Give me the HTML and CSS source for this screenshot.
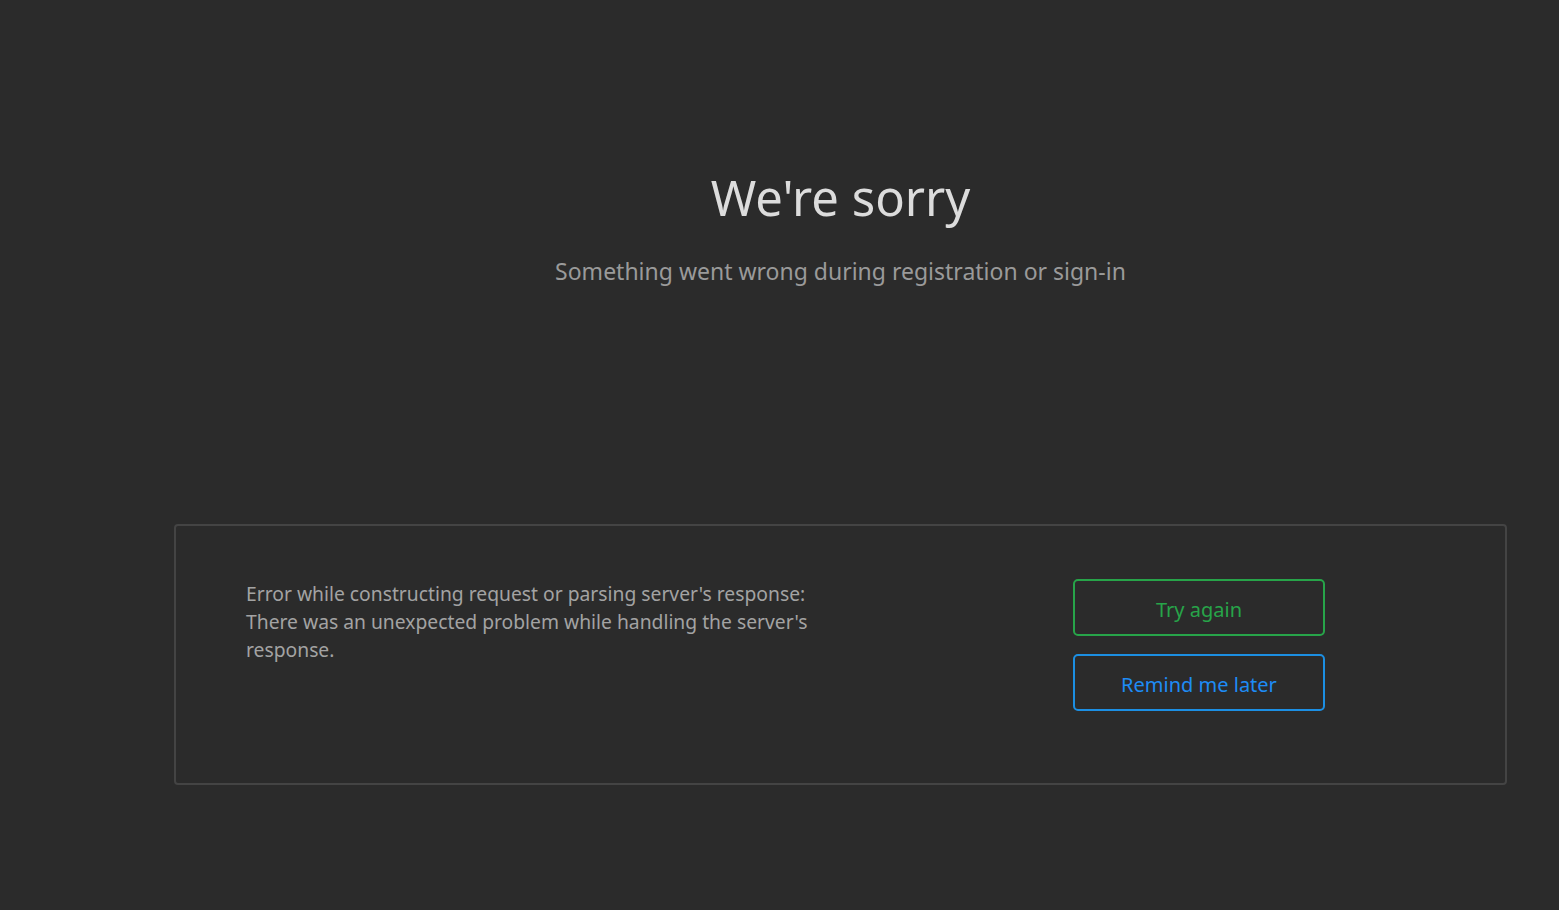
FILE: index.html
```html
<!DOCTYPE html>
<html lang="en">
<head>
    <meta charset="UTF-8">
    <meta name="viewport" content="width=device-width, initial-scale=1.0">
    <title>We're sorry</title>
    <link rel="stylesheet" href="styles.css">
</head>
<body>
    <div class="page">
        <div class="header">
            <h1 class="title">We're sorry</h1>
            <p class="subtitle">Something went wrong during registration or sign-in</p>
        </div>
        <div class="error-box">
            <p class="error-text">Error while constructing request or parsing server's response: There was an unexpected problem while handling the server's response.</p>
            <div class="actions">
                <button class="btn btn-retry">Try again</button>
                <button class="btn btn-later">Remind me later</button>
            </div>
        </div>
    </div>
</body>
</html>
```

FILE: styles.css
```css
*{
    margin:0;
    padding:0;
    box-sizing:border-box;
}
body{
    background-color:#2b2b2b;
    font-family:"Noto Sans", "Open Sans", sans-serif;
    height:100vh;
    overflow:hidden;
}
.page{
    margin-left:174px;
    width:1333px;
    padding-top:163px;
}
.header{
    text-align:center;
    height:361px;
}
.title{
    font-weight:normal;
    font-size:49px;
    line-height:68px;
    color:#dcdcdc;
}
.subtitle{
    margin-top:24px;
    font-size:23px;
    line-height:32px;
    color:#9a9a9a;
}
.error-box{
    display:flex;
    justify-content:space-between;
    align-items:flex-start;
    border:2px solid #444444;
    border-radius:4px;
    padding:53px 180px 72px 70px;
}
.error-text{
    width:600px;
    margin-top:1px;
    font-size:19.3px;
    line-height:28px;
    color:#a3a3a3;
}
.actions{
    display:flex;
    flex-direction:column;
    gap:18px;
    width:252px;
}
.btn{
    height:57px;
    padding-top:3px;
    background:transparent;
    border:2px solid;
    border-radius:5px;
    font-family:inherit;
    font-size:20px;
    cursor:pointer;
}
.btn-retry{
    border-color:#27a449;
    color:#27a449;
}
.btn-later{
    border-color:#1c8fe3;
    color:#1e8cf5;
}
```
